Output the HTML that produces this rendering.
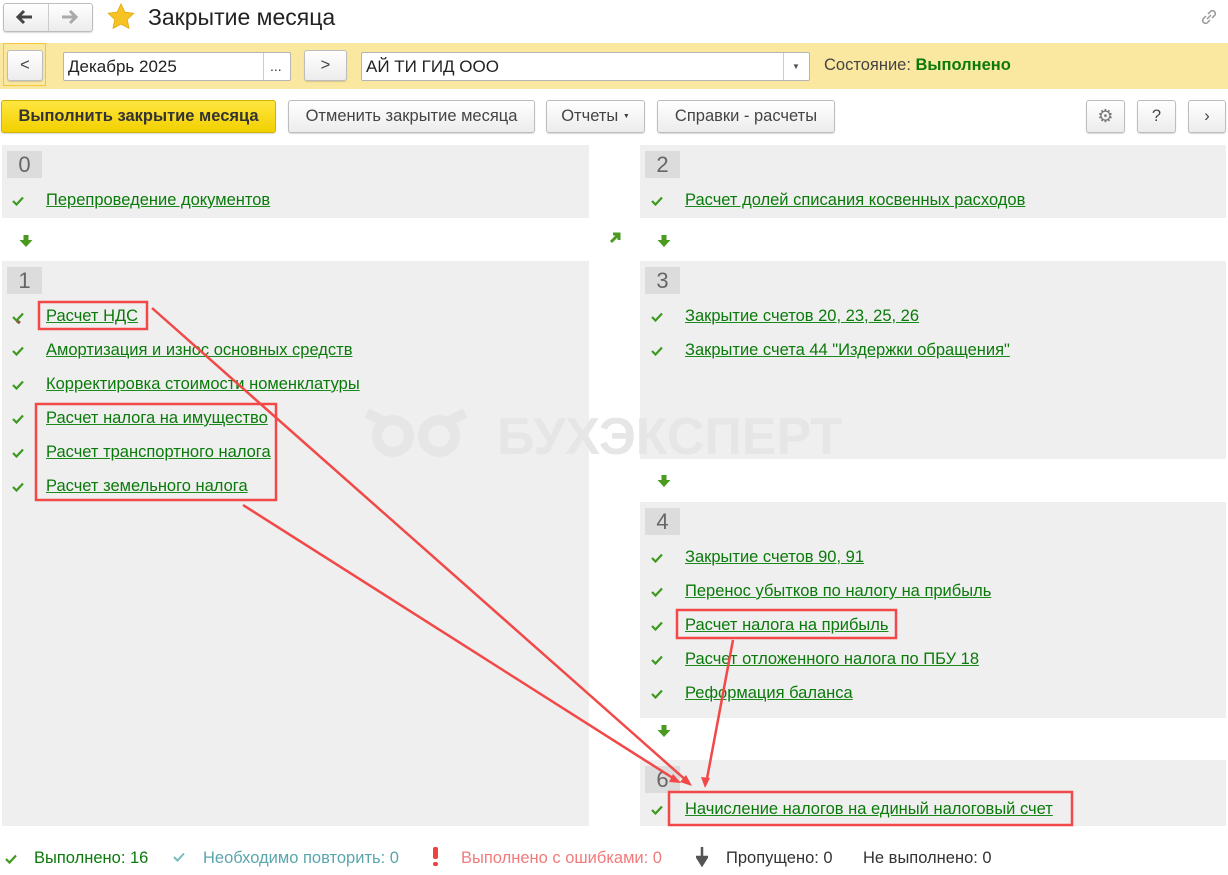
<!DOCTYPE html><html><head><meta charset="utf-8"><style>
*{box-sizing:border-box;margin:0;padding:0}
body{width:1228px;height:875px;background:#fff;font-family:"Liberation Sans",sans-serif;position:relative;overflow:hidden;color:#333}
.a{position:absolute}
.btn{position:absolute;border:1px solid #bdbdbd;border-radius:3px;background:linear-gradient(#fff,#ececec);font-size:16.5px;color:#444;text-align:center;box-shadow:0 1px 1px rgba(0,0,0,.15);white-space:nowrap}
.inp{position:absolute;border:1px solid #b5b5b5;border-radius:2px;background:#fff;font-size:17px;color:#222;padding-left:4px}
.panel{position:absolute;background:#efefef}
.num{position:absolute;left:5px;top:6px;width:35px;height:27px;background:#dcdcdc;font-size:22px;color:#666;text-align:center;line-height:28px}
.it{position:absolute;font-size:16.5px;color:#0a7a0a;text-decoration:underline;text-decoration-color:#1a8a1a;white-space:nowrap}
.ck{position:absolute;width:12px;height:10px}
</style></head><body>
<svg width="0" height="0" style="position:absolute"><defs><symbol id="c" viewBox="0 0 12 10"><path d="M1 5l3.5 3.5L11 1.5" stroke="#3d9a1e" stroke-width="2.2" fill="none"/></symbol></defs></svg>
<div class="btn" style="left:3px;top:3px;width:90px;height:29px;"></div>
<div class="a" style="left:48px;top:4px;width:1px;height:27px;background:#ccc"></div>
<svg class="a" style="left:15px;top:9px" width="20" height="16" viewBox="0 0 20 16"><path d="M9 2L3 8l6 6M3 8h14" stroke="#444" stroke-width="3" fill="none"/></svg>
<svg class="a" style="left:59px;top:9px" width="20" height="16" viewBox="0 0 20 16"><path d="M11 2l6 6-6 6M17 8H3" stroke="#aaa" stroke-width="3" fill="none"/></svg>
<svg class="a" style="left:106px;top:2px" width="30" height="30" viewBox="0 0 24 24"><path d="M12 1.5l3.1 6.6 7.2.9-5.3 5 1.4 7.1L12 17.6 5.6 21.1 7 14l-5.3-5 7.2-.9z" fill="#f7c324" stroke="#e0a800" stroke-width=".6"/></svg>
<div class="a" style="left:148px;top:4px;font-size:23px;color:#222">Закрытие месяца</div>
<svg class="a" style="left:1198px;top:6px" width="22" height="22" viewBox="0 0 22 22" fill="none" stroke="#999" stroke-width="1.5"><path d="M9 13l4-4"/><path d="M8 10l-3 3a3 3 0 004 4l3-3"/><path d="M14 12l3-3a3 3 0 00-4-4l-3 3"/></svg>

<div class="a" style="left:0;top:43px;width:1228px;height:46px;background:#fbe8a0"></div>
<div class="a" style="left:3px;top:43px;width:43px;height:43px;border:1px solid #f3c63a"></div>
<div class="btn" style="left:7px;top:50px;width:36px;height:31px;line-height:28px">&lt;</div>
<div class="inp" style="left:63px;top:52px;width:228px;height:29px;line-height:27px">Декабрь 2025</div>
<div class="a" style="left:263px;top:53px;width:1px;height:27px;background:#ccc"></div>
<div class="a" style="left:270px;top:58px;font-size:14px">...</div>
<div class="btn" style="left:304px;top:50px;width:43px;height:31px;line-height:28px">&gt;</div>
<div class="inp" style="left:361px;top:52px;width:449px;height:29px;line-height:27px">АЙ ТИ ГИД ООО</div>
<div class="a" style="left:783px;top:53px;width:1px;height:27px;background:#ccc"></div>
<div class="a" style="left:792px;top:62px;font-size:8px;color:#555">▼</div>
<div class="a" style="left:824px;top:56px;font-size:16.5px;color:#444">Состояние: <b style="color:#0a7a0a">Выполнено</b></div>

<div class="btn" style="left:1px;top:100px;width:275px;height:33px;line-height:31px;background:linear-gradient(#ffe640,#f2d000);border-color:#d2b300;font-weight:bold;color:#333">Выполнить закрытие месяца</div>
<div class="btn" style="left:288px;top:100px;width:247px;height:33px;line-height:31px">Отменить закрытие месяца</div>
<div class="btn" style="left:546px;top:100px;width:99px;height:33px;line-height:31px">Отчеты <span style="font-size:7px;vertical-align:middle">▼</span></div>
<div class="btn" style="left:657px;top:100px;width:178px;height:33px;line-height:31px">Справки - расчеты</div>
<div class="btn" style="left:1086px;top:100px;width:39px;height:33px;line-height:31px;color:#777;font-size:18px">⚙</div>
<div class="btn" style="left:1137px;top:100px;width:39px;height:33px;line-height:31px">?</div>
<div class="btn" style="left:1188px;top:100px;width:38px;height:33px;line-height:31px">›</div>

<div class="panel" style="left:2px;top:145px;width:587px;height:73px"><div class="num">0</div></div>
<div class="panel" style="left:2px;top:261px;width:587px;height:565px"><div class="num">1</div></div>
<div class="panel" style="left:640px;top:145px;width:586px;height:73px"><div class="num">2</div></div>
<div class="panel" style="left:640px;top:261px;width:586px;height:198px"><div class="num">3</div></div>
<div class="panel" style="left:640px;top:502px;width:586px;height:216px"><div class="num">4</div></div>
<div class="panel" style="left:640px;top:760px;width:586px;height:66px"><div class="num">6</div></div>

<svg class="a" style="left:365px;top:408px" width="105" height="50" viewBox="0 0 105 50"><g fill="none" stroke="#e6e6e6" stroke-width="10"><circle cx="28" cy="28" r="16"/><circle cx="74" cy="28" r="16"/><path d="M2 5l20 10M100 5L80 15"/></g></svg>
<div class="a" style="left:497px;top:407px;font-size:52px;font-weight:bold;color:#e6e6e6">БУХЭКСПЕРТ</div>

<svg class="ck" style="left:12px;top:196px"><use href="#c"/></svg><div class="it" style="left:46px;top:191px">Перепроведение документов</div>
<svg class="ck" style="left:12px;top:312px"><use href="#c"/></svg><div class="it" style="left:46px;top:307px">Расчет НДС</div>
<svg class="ck" style="left:12px;top:346px"><use href="#c"/></svg><div class="it" style="left:46px;top:341px">Амортизация и износ основных средств</div>
<svg class="ck" style="left:12px;top:380px"><use href="#c"/></svg><div class="it" style="left:46px;top:375px">Корректировка стоимости номенклатуры</div>
<svg class="ck" style="left:12px;top:414px"><use href="#c"/></svg><div class="it" style="left:46px;top:409px">Расчет налога на имущество</div>
<svg class="ck" style="left:12px;top:448px"><use href="#c"/></svg><div class="it" style="left:46px;top:443px">Расчет транспортного налога</div>
<svg class="ck" style="left:12px;top:482px"><use href="#c"/></svg><div class="it" style="left:46px;top:477px">Расчет земельного налога</div>

<svg class="ck" style="left:651px;top:196px"><use href="#c"/></svg><div class="it" style="left:685px;top:191px">Расчет долей списания косвенных расходов</div>
<svg class="ck" style="left:651px;top:312px"><use href="#c"/></svg><div class="it" style="left:685px;top:307px">Закрытие счетов 20, 23, 25, 26</div>
<svg class="ck" style="left:651px;top:346px"><use href="#c"/></svg><div class="it" style="left:685px;top:341px">Закрытие счета 44 "Издержки обращения"</div>
<svg class="ck" style="left:651px;top:553px"><use href="#c"/></svg><div class="it" style="left:685px;top:548px">Закрытие счетов 90, 91</div>
<svg class="ck" style="left:651px;top:587px"><use href="#c"/></svg><div class="it" style="left:685px;top:582px">Перенос убытков по налогу на прибыль</div>
<svg class="ck" style="left:651px;top:621px"><use href="#c"/></svg><div class="it" style="left:685px;top:616px">Расчет налога на прибыль</div>
<svg class="ck" style="left:651px;top:655px"><use href="#c"/></svg><div class="it" style="left:685px;top:650px">Расчет отложенного налога по ПБУ 18</div>
<svg class="ck" style="left:651px;top:689px"><use href="#c"/></svg><div class="it" style="left:685px;top:684px">Реформация баланса</div>
<svg class="ck" style="left:651px;top:805px"><use href="#c"/></svg><div class="it" style="left:685px;top:800px">Начисление налогов на единый налоговый счет</div>

<svg class="a" style="left:0;top:0" width="1228" height="875">
<defs><path id="dn" d="M-2.5 -6h5v5h4l-6.5 7-6.5-7h4z" fill="#4a9a20"/></defs>
<use href="#dn" x="26" y="241"/><use href="#dn" x="664" y="241"/><use href="#dn" x="664" y="481"/><use href="#dn" x="664" y="731"/>
<path d="M611 242l8-8m-6 0h6v6" stroke="#4a9a20" stroke-width="3" fill="none"/>
<path d="M17 321l3 2" stroke="#8a5a3a" stroke-width="3"/>
<g stroke="#f24848" stroke-width="2.5" fill="none">
<rect x="39" y="302" width="108" height="27"/>
<rect x="36" y="404" width="240" height="96"/>
<rect x="677" y="610" width="219" height="28"/>
<rect x="669" y="792" width="403" height="33"/>
<path d="M152 308L688 782"/><path d="M243 505L676 780"/><path d="M733 640L706 784"/>
</g>
<g fill="#f24848">
<path d="M692 786l-12-4 6-7z"/><path d="M681 783l-12-1 4-8z"/><path d="M705 788l-4-11 9 1z"/>
</g>
</svg>

<svg class="ck" style="left:5px;top:854px"><use href="#c"/></svg>
<div class="a" style="left:34px;top:849px;font-size:16.5px;color:#0a7a0a">Выполнено: 16</div>
<svg class="ck" style="left:173px;top:852px" viewBox="0 0 12 10"><path d="M1 5l3.5 3.5L11 1.5" stroke="#7bb" stroke-width="2" fill="none"/></svg>
<div class="a" style="left:203px;top:849px;font-size:16.5px;color:#5aa6ad">Необходимо повторить: 0</div>
<div class="a" style="left:433px;top:847px;width:5px;height:12px;background:#f04040;border-radius:2px"></div>
<div class="a" style="left:433px;top:862px;width:5px;height:4px;background:#f04040;border-radius:2px"></div>
<div class="a" style="left:461px;top:849px;font-size:16.5px;color:#f27a7a">Выполнено с ошибками: 0</div>
<svg class="a" style="left:696px;top:847px" width="12" height="20"><path d="M6 0v14M1 10l5 8 5-8z" stroke="#555" stroke-width="2.5" fill="#555"/></svg>
<div class="a" style="left:726px;top:849px;font-size:16.5px;color:#333">Пропущено: 0</div>
<div class="a" style="left:863px;top:849px;font-size:16.5px;color:#333">Не выполнено: 0</div>
</body></html>
